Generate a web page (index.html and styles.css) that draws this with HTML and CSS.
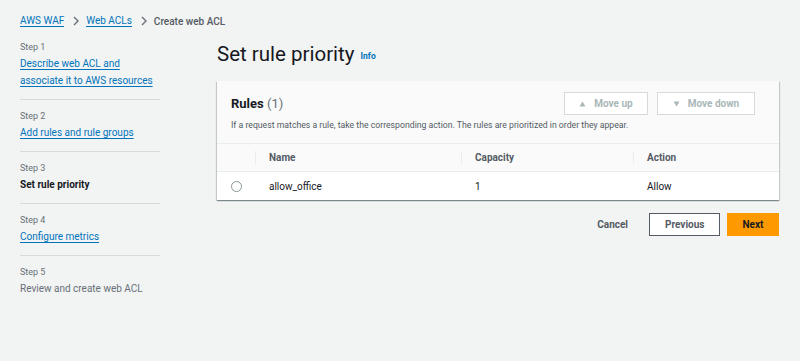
FILE: index.html
```html
<!DOCTYPE html>
<html lang="en">
<head>
    <meta charset="UTF-8">
    <title>Create web ACL</title>
    <link rel="stylesheet" href="styles.css">
</head>
<body>

    <div class="crumbs">
        <a href="#">AWS WAF</a>
        <svg class="sep" width="8" height="10" viewBox="0 0 8 10"><path d="M2 1l4 4-4 4" fill="none" stroke="#687078" stroke-width="1.4"/></svg>
        <a href="#">Web ACLs</a>
        <svg class="sep" width="8" height="10" viewBox="0 0 8 10"><path d="M2 1l4 4-4 4" fill="none" stroke="#687078" stroke-width="1.4"/></svg>
        <span class="current">Create web ACL</span>
    </div>

    <div class="layout">
        <ul class="steps">
            <li>
                <div class="step-num">Step 1</div>
                <a href="#">Describe web ACL and<br>associate it to AWS resources</a>
            </li>
            <li>
                <div class="step-num">Step 2</div>
                <a href="#">Add rules and rule groups</a>
            </li>
            <li>
                <div class="step-num">Step 3</div>
                <span class="active">Set rule priority</span>
            </li>
            <li>
                <div class="step-num">Step 4</div>
                <a href="#">Configure metrics</a>
            </li>
            <li>
                <div class="step-num">Step 5</div>
                <span class="disabled">Review and create web ACL</span>
            </li>
        </ul>

        <div class="main">
            <h1>Set rule priority <a href="#" class="info">Info</a></h1>

            <div class="card">
                <div class="card-head">
                    <div class="card-top">
                        <h2>Rules <span class="count">(1)</span></h2>
                        <div class="card-actions">
                            <button class="btn-move" disabled>
                                <svg class="tri" width="7" height="6" viewBox="0 0 7 6"><path d="M3.5 0.5L6.5 5.5H0.5Z" fill="#aab7b8"/></svg>Move up
                            </button>
                            <button class="btn-move" disabled>
                                <svg class="tri" width="7" height="6" viewBox="0 0 7 6"><path d="M0.5 0.5H6.5L3.5 5.5Z" fill="#aab7b8"/></svg>Move down
                            </button>
                        </div>
                    </div>
                    <p>If a request matches a rule, take the corresponding action. The rules are prioritized in order they appear.</p>
                </div>
                <table>
                    <thead>
                        <tr>
                            <th class="col-sel"></th>
                            <th class="col-name">Name</th>
                            <th class="col-cap">Capacity</th>
                            <th>Action</th>
                        </tr>
                    </thead>
                    <tbody>
                        <tr>
                            <td class="col-sel"><span class="radio"></span></td>
                            <td>allow_office</td>
                            <td>1</td>
                            <td>Allow</td>
                        </tr>
                    </tbody>
                </table>
            </div>

            <div class="footer">
                <button class="btn-link">Cancel</button>
                <button class="btn-normal">Previous</button>
                <button class="btn-primary">Next</button>
            </div>
        </div>
    </div>

</body>
</html>
```

FILE: styles.css
```css
body {
    margin: 0;
    background: #f2f3f3;
    font-family: Roboto, "Liberation Sans", Arial, sans-serif;
    color: #16191f;
    font-size: 10px;
}

a {
    color: #0073bb;
    text-decoration: none;
    border-bottom: 1px solid #0073bb;
}

.crumbs {
    padding: 12px 20px 0;
    height: 18px;
    font-size: 10px;
    display: flex;
    align-items: center;
}

.crumbs .sep {
    margin: 0 6px 0 8px;
}

.crumbs .current {
    color: #545b64;
    font-weight: 500;
}

.layout {
    display: flex;
    padding: 0 21px 0 20px;
}

.steps {
    list-style: none;
    margin: 0;
    padding: 0;
    width: 140px;
    flex-shrink: 0;
}

.steps li {
    border-bottom: 1px solid #d5dbdb;
    padding: 9px 0 10px;
    line-height: 17px;
}

.steps li:first-child {
    padding-top: 10px;
}

.steps li:last-child {
    border-bottom: none;
}

.step-num {
    color: #687078;
    font-size: 9px;
    line-height: 14px;
    margin-bottom: 1px;
}

.steps a {
    line-height: 17px;
    border-bottom: 0;
    text-decoration: underline;
    text-underline-offset: 2px;
}

.steps .active {
    font-weight: 700;
}

.steps .disabled {
    color: #687078;
}

.main {
    flex: 1;
    margin-left: 57px;
}

h1 {
    font-size: 20.5px;
    font-weight: 400;
    margin: 11px 0 12px;
    line-height: 26px;
    color: #16191f;
}

h1 .info {
    font-size: 8.5px;
    font-weight: 700;
    border: 0;
    vertical-align: 2px;
    margin-left: 1px;
}

.card {
    background: #fafafa;
    box-shadow: 0 1px 1px 0 rgba(0, 28, 36, 0.3), 1px 1px 1px 0 rgba(0, 28, 36, 0.15), -1px 1px 1px 0 rgba(0, 28, 36, 0.15);
}

.card-head {
    padding: 11px 24px 12px 14px;
    border-bottom: 1px solid #eaeded;
}

.card-top {
    display: flex;
    justify-content: space-between;
    align-items: center;
}

.card-top h2 {
    font-size: 13px;
    font-weight: 700;
    margin: 0;
    line-height: 16px;
}

.card-top .count {
    font-weight: 400;
    color: #687078;
}

.card-head p {
    margin: 4px 0 0;
    font-size: 8.7px;
    line-height: 12px;
    color: #545b64;
}

.card-actions {
    display: flex;
    gap: 9px;
}

.btn-move {
    font-family: inherit;
    background: #fff;
    border: 1px solid #d5dbdb;
    color: #aab7b8;
    font-weight: 700;
    font-size: 10px;
    height: 23px;
    padding: 0;
    white-space: nowrap;
    display: flex;
    align-items: center;
    justify-content: center;
}

.btn-move:first-child {
    width: 84px;
}

.btn-move:last-child {
    width: 98px;
}

.btn-move .tri {
    margin-right: 8px;
}

table {
    width: 100%;
    border-collapse: collapse;
}

th {
    text-align: left;
    font-weight: 700;
    color: #545b64;
    font-size: 10px;
    height: 27px;
    padding: 0 14px;
    position: relative;
}

th + th::before {
    content: "";
    position: absolute;
    left: 0;
    top: 7px;
    bottom: 7px;
    border-left: 1px solid #eaeded;
}

td {
    background: #fff;
    height: 28px;
    padding: 0 14px;
    font-size: 10px;
    color: #16191f;
    border-top: 1px solid #eaeded;
}

.col-sel {
    width: 9px;
    padding: 0 13px 0 14px;
}

.col-name {
    width: 178px;
}

.col-cap {
    width: 144px;
}

.radio {
    display: block;
    width: 9px;
    height: 9px;
    border: 1px solid #879596;
    border-radius: 50%;
    background: #fff;
}

.footer {
    display: flex;
    justify-content: flex-end;
    align-items: center;
    margin-top: 13px;
    gap: 7px;
}

.footer button {
    font-family: inherit;
    font-size: 10px;
    font-weight: 700;
    height: 23px;
}

.btn-link {
    background: none;
    border: 0;
    color: #545b64;
    padding: 0 14px;
    margin-right: 0;
}

.btn-normal {
    background: #fff;
    border: 1px solid #545b64;
    color: #545b64;
    padding: 0 15px;
    width: 71px;
}

.btn-primary {
    background: #ff9900;
    border: 1px solid #ff9900;
    color: #16191f;
    padding: 0 14px;
    width: 52px;
}
```
